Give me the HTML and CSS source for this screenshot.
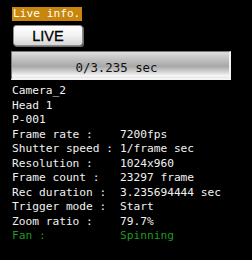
FILE: index.html
```html
<!DOCTYPE html>
<html>
<head>
<meta charset="utf-8">
<link rel="stylesheet" href="styles.css">
</head>
<body>
<div class="panel">
  <div class="tag">Live info.</div>
  <div class="live-btn">LIVE</div>
  <div class="progress"><span>0/3.235 sec</span></div>
  <div class="info">
    <div class="line">Camera_2</div>
    <div class="line">Head 1</div>
    <div class="line">P-001</div>
  </div>
  <div class="grid">
    <div>Frame rate :</div><div>7200fps</div>
    <div>Shutter speed :</div><div>1/frame sec</div>
    <div>Resolution :</div><div>1024x960</div>
    <div>Frame count :</div><div>23297 frame</div>
    <div>Rec duration :</div><div>3.235694444 sec</div>
    <div>Trigger mode :</div><div>Start</div>
    <div>Zoom ratio :</div><div>79.7%</div>
    <div class="fan">Fan :</div><div class="fan">Spinning</div>
  </div>
</div>
</body>
</html>
```
FILE: styles.css
```css
html, body {
  margin: 0;
  padding: 0;
  background: #000;
}
.panel {
  width: 252px;
  height: 260px;
  overflow: hidden;
  font-family: "DejaVu Sans Mono", "Liberation Mono", monospace;
  font-size: 11.2px;
  color: #f2f2f2;
  padding-top: 7px;
  box-sizing: border-box;
}
.tag {
  margin-left: 12px;
  width: 70px;
  height: 14px;
  line-height: 14px;
  background: #c9860c;
  color: #fff;
  padding-left: 1px;
  box-sizing: border-box;
  white-space: nowrap;
}
.live-btn {
  margin: 4px 0 0 13px;
  width: 70px;
  height: 21px;
  box-sizing: border-box;
  border: 1px solid #8c8c8c;
  border-radius: 3px;
  background: linear-gradient(#ffffff, #f2f2f2 50%, #d6d6d6);
  box-shadow: 1px 1px 0 #6a6a6a;
  font-family: "Liberation Sans", Arial, sans-serif;
  font-size: 14.5px;
  line-height: 20px;
  color: #000;
  text-align: center;
  -webkit-text-stroke: 0.3px #000;
}
.progress {
  margin: 5px 0 0 11px;
  width: 220px;
  height: 29px;
  box-sizing: border-box;
  border-top: 1px solid #777;
  border-left: 1px solid #777;
  border-right: 2px solid #f4f4f4;
  border-bottom: 2px solid #f4f4f4;
  background: linear-gradient(#dedede, #c4c4c4 25%, #a8a8a8 55%, #d0d0d0 75%, #f8f8f8 92%, #e4e4e4);
  display: flex;
  justify-content: center;
  padding: 9px 8px 0 0;
  color: #111;
  font-size: 12.4px;
  line-height: 14px;
}
.info {
  margin-top: 4px;
  padding-left: 12px;
  line-height: 14.5px;
}
.grid {
  display: grid;
  grid-template-columns: 108px auto;
  padding-left: 12px;
  line-height: 14.5px;
  white-space: nowrap;
}
.fan {
  color: #1f9a1f;
}
```
